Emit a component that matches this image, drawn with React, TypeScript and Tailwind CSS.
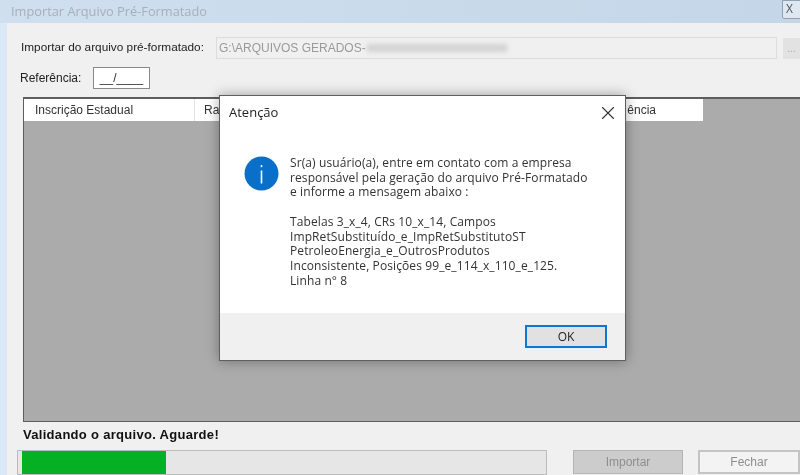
import React from 'react'
import { X } from 'lucide-react'

const dialogFont = "font-['Open_Sans','Noto_Sans',sans-serif]"
const formFont = "font-['Liberation_Sans',Arial,sans-serif]"

const Columns = () => (
  <div className={`flex h-[22px] w-[679px] bg-white text-[12px] leading-[22px] text-[#333] ${formFont}`}>
    <div className="w-[171px] border-r border-[#e2e2e2] pl-[11px]">Inscrição Estadual</div>
    <div className="w-[25px] overflow-hidden whitespace-nowrap pl-[9px]">Razão Social</div>
    <div className="flex-1" />
    <div className="w-[104px] whitespace-nowrap text-right pr-[47px]">ência</div>
  </div>
)

const Dialog = () => (
  <div className={`absolute left-[219px] top-[95px] flex h-[266px] w-[407px] flex-col border border-[#5f5f5f] bg-white shadow-[0_0_12px_rgba(0,0,0,0.35)] ${dialogFont}`}>
    <div className="flex h-[34px] items-center justify-between pl-[9px] pr-[6px]">
      <span className="text-[13px] text-[#222]">Atenção</span>
      <X size={22} strokeWidth={1.2} className="text-[#333]" />
    </div>
    <div className="flex flex-1 pl-[24px] pt-[26px]">
      <svg width="35" height="35" viewBox="0 0 35 35" className="shrink-0">
        <circle cx="17.5" cy="17.5" r="17" fill="#0a6fc8" />
        <rect x="16.7" y="14.5" width="1.6" height="13" fill="#fff" />
        <rect x="16.7" y="9" width="1.6" height="2.2" fill="#fff" />
      </svg>
      <div className="ml-[11px] text-[12px] leading-[14.7px] tracking-[0.1px] text-[#333]">
        <p>Sr(a) usuário(a), entre em contato com a empresa</p>
        <p>responsável pela geração do arquivo Pré-Formatado</p>
        <p>e informe a mensagem abaixo :</p>
        <p className="mt-[14.7px]">Tabelas 3_x_4, CRs 10_x_14, Campos</p>
        <p>ImpRetSubstituído_e_ImpRetSubstitutoST</p>
        <p>PetroleoEnergia_e_OutrosProdutos</p>
        <p>Inconsistente, Posições 99_e_114_x_110_e_125.</p>
        <p>Linha n° 8</p>
      </div>
    </div>
    <div className="flex h-[47px] items-center justify-end bg-[#f0f0f0] pr-[18px]">
      <button className="h-[23px] w-[82px] border-2 border-[#0a78d4] bg-[#e1e1e1] text-[12px] text-[#222]">OK</button>
    </div>
  </div>
)

export default function App() {
  return (
    <div className={`relative flex h-[475px] w-[800px] flex-col overflow-hidden bg-[#dbe8f5] blur-[0.4px] ${formFont}`}>
      <div className={`relative flex h-[23px] shrink-0 items-center bg-gradient-to-r from-[#cfdfee] to-[#c4d6e8] pl-[11px] text-[12.8px] text-[#a5b0ba] ${dialogFont}`}>
        Importar Arquivo Pré-Formatado
        <div className="absolute right-[-12px] top-[0px] flex h-[19px] w-[30px] items-start justify-start rounded-b-[2px] border border-[#8ea2b6] bg-[#dfe8f1] pl-[3px] text-[12px] leading-[15px] text-[#4a5560]">
          X
        </div>
      </div>

      <div className="ml-[7px] flex flex-1 flex-col bg-[#f0f0f0] pt-[14px]">
        <div className="flex h-[22px] items-center">
          <span className="ml-[14px] w-[195px] text-[11.8px] text-[#222]">Importar do arquivo pré-formatado:</span>
          <div className="flex h-[22px] w-[561px] items-center border border-[#dcdcdc] pl-[2px] text-[12px] text-[#9a9a9a]">
            G:\ARQUIVOS GERADOS-
            <span className="ml-[1px] h-[8px] w-[140px] bg-[#d2d2d2] blur-[2.5px]" />
          </div>
          <div className="ml-[6px] flex h-[21px] flex-1 items-center justify-center bg-[#e2e2e2] text-[10px] text-[#aaa]">...</div>
        </div>

        <div className="mt-[8px] flex h-[22px] items-center">
          <span className="ml-[13px] w-[73px] text-[12px] text-[#222]">Referência:</span>
          <div className="flex h-[22px] w-[57px] items-center justify-center border border-[#8a8a8a] bg-white text-[12px] text-[#333]">__/____</div>
        </div>

        <div className="relative ml-[16px] mt-[8px] h-[325px] border-t-2 border-l border-b border-[#5e5e5e] bg-[#ababab]">
          <Columns />
        </div>

        <div className="ml-[16px] mt-[4px] h-[17px] text-[13px] font-bold leading-[17px] tracking-[0.3px] text-[#111]">Validando o arquivo. Aguarde!</div>

        <div className="mt-[7px] flex items-start">
          <div className="ml-[10px] h-[25px] w-[530px] border border-[#bcbcbc] bg-[#e6e6e6] pl-[4px]">
            <div className="h-full w-[144px] bg-[#06b025]" />
          </div>
          <button className="ml-[26px] h-[24px] w-[110px] border border-[#b5b5b5] bg-[#cccccc] text-[12px] text-[#8e8e8e]">Importar</button>
          <button className="ml-[15px] h-[24px] flex-1 border-2 border-[#c4c4c4] bg-[#f3f3f3] text-[12px] text-[#8e8e8e]">Fechar</button>
        </div>
      </div>

      <Dialog />
    </div>
  )
}
